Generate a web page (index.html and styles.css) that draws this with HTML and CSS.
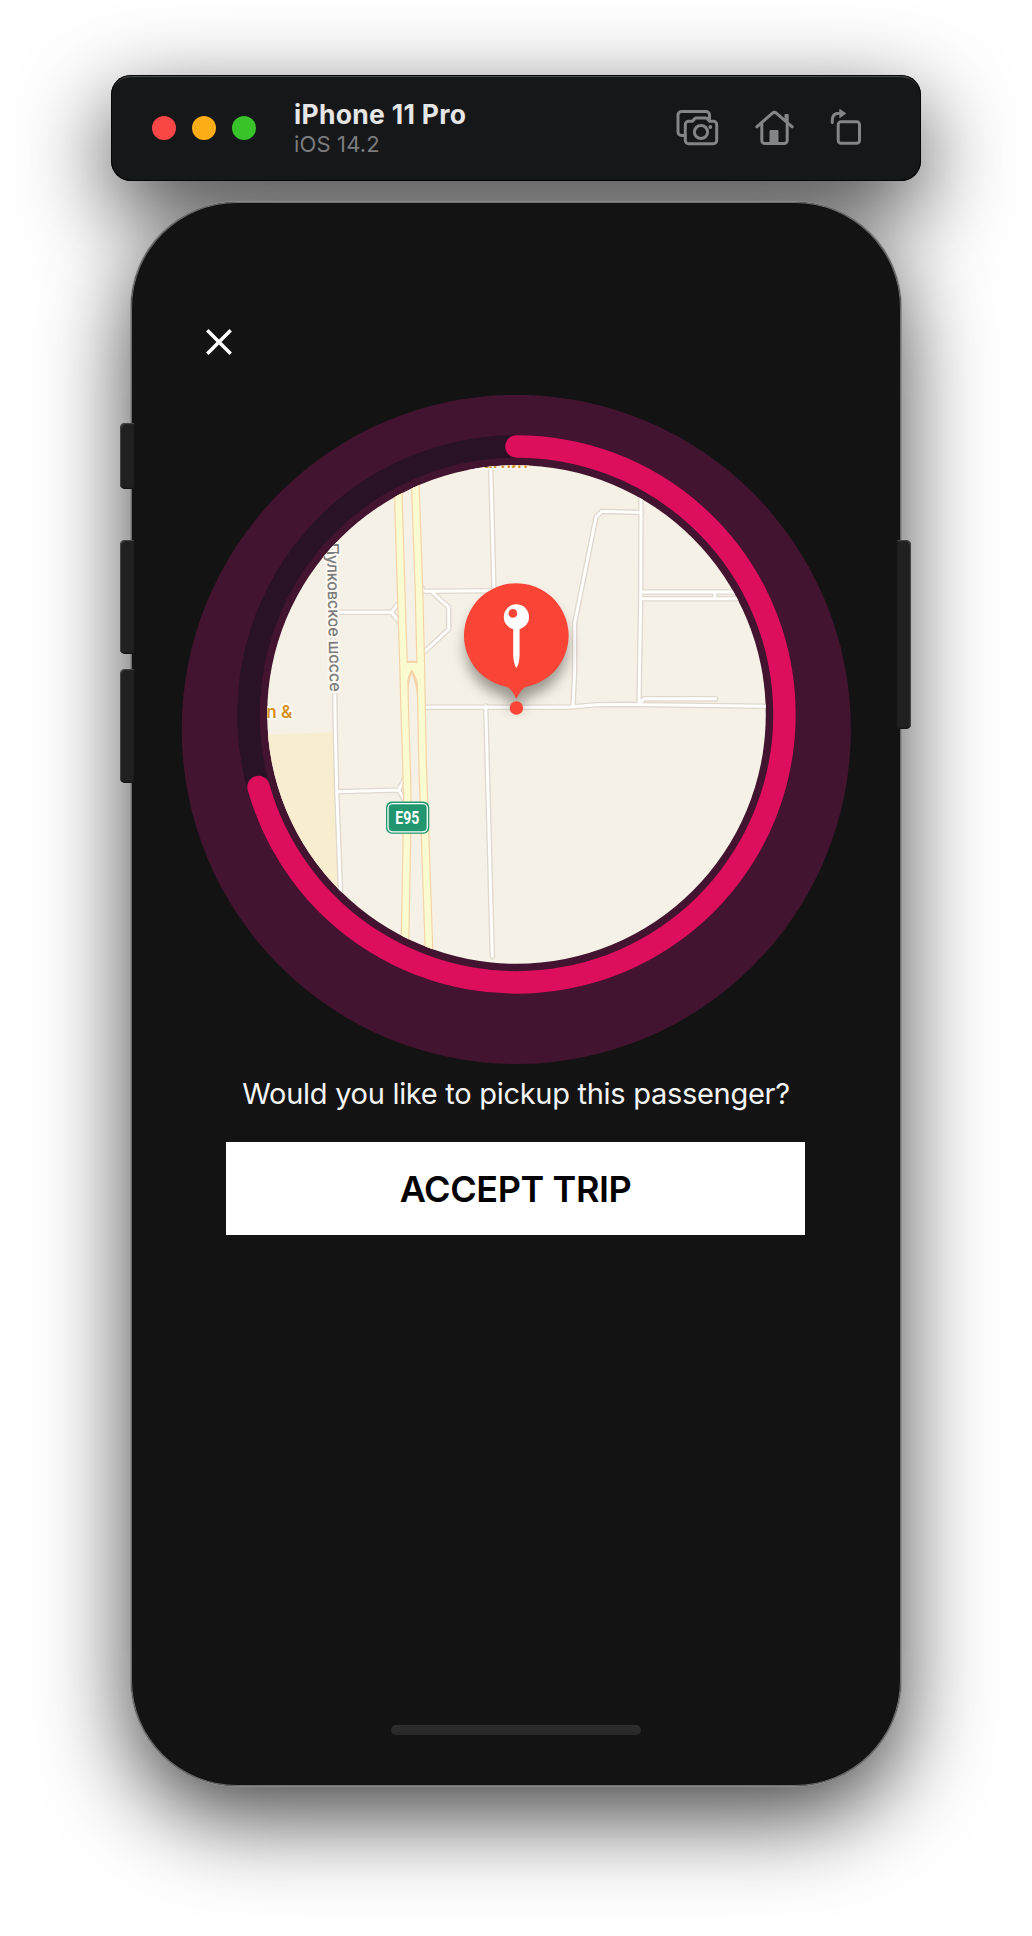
FILE: index.html
```html
<!DOCTYPE html>
<html lang="en">
<head>
<meta charset="utf-8">
<title>iPhone 11 Pro</title>
<link rel="stylesheet" href="styles.css">
</head>
<body>
<main class="desktop">
  <header class="toolbar lifted">
    <div class="lights">
      <span class="light light-close"></span>
      <span class="light light-minimize"></span>
      <span class="light light-zoom"></span>
    </div>
    <div class="titles">
      <h1 class="device-name">iPhone 11 Pro</h1>
      <p class="device-os">iOS 14.2</p>
    </div>
    <div class="tools">
      <svg class="tool" width="44" height="38" viewBox="675 109 44 38">
        <path d="M684 135.500h-2.500a3.500 3.500 0 0 1-3.500-3.500v-17a3.500 3.500 0 0 1 3.500-3.500h24.500a3.500 3.500 0 0 1 3.500 3.500v4"/>
        <path d="M688.500 121.300h4l2.300-2.800q.6-.6 1.600-.6h9.200q1 0 1.600.6l2.300 2.800h4a3.200 3.200 0 0 1 3.200 3.200v16a3.200 3.200 0 0 1-3.200 3.200h-25a3.200 3.200 0 0 1-3.200-3.200v-16a3.200 3.200 0 0 1 3.200-3.200z"/>
        <circle cx="701" cy="132" r="6.600"/>
        <circle class="solid" cx="710.300" cy="127" r="1.900"/>
      </svg>
      <svg class="tool" width="40" height="38" viewBox="754.500 109 40 38">
        <path d="M757.300 126.800L772.700 113.300q2.200-1.900 4.400 0L792.700 126.800"/>
        <path d="M762.300 123.500v17a3 3 0 0 0 3 3h19.400a3 3 0 0 0 3-3v-17"/>
        <path class="solid" d="M785 114.800q0-.8.800-.8h2.600q.8 0 .8.800v9.500l-4.200-3.600z"/>
        <path class="solid" d="M770 131q0-1 1-1h7q1 0 1 1v12h-9z"/>
      </svg>
      <svg class="tool" width="34" height="38" viewBox="829 109 34 38">
        <path d="M832.300 122.500v-2.500q0-6.700 7-6.700h1"/>
        <path class="solid" d="M839.300 109.300q0-.7.600-.3l5.800 4.100q.5.400 0 .8l-5.800 4q-.6.400-.6-.3z"/>
        <rect x="838.200" y="121.700" width="21.300" height="21.600" rx="2.800"/>
      </svg>
    </div>
  </header>

  <section class="phone lifted">
    <span class="key key-mute"></span>
    <span class="key key-up"></span>
    <span class="key key-down"></span>
    <span class="key key-power"></span>

    <button class="close" aria-label="Close">
      <svg width="28" height="28" viewBox="0 0 28 28"><path d="M2.300 2.300L25.700 25.700M25.700 2.300L2.300 25.700"/></svg>
    </button>

    <svg class="trip" width="670" height="670" viewBox="181 395 670 670">
      <defs>
        <clipPath id="lens"><circle cx="516.500" cy="714.500" r="249.300"/></clipPath>
        <filter id="soft" x="-50%" y="-50%" width="200%" height="200%"><feGaussianBlur stdDeviation="7"/></filter>
      </defs>
      <circle class="halo" cx="516.300" cy="729.400" r="334.600"/>
      <circle class="track" cx="516.500" cy="714.400" r="268"/>
      <path class="progress" d="M516.500 446.400A268 268 0 1 1 258.500 787"/>
      <g clip-path="url(#lens)">
        <circle class="land" cx="516.500" cy="714.500" r="250"/>
        <path class="field" d="M260 734.500L334 732.300L341.500 900H260z"/>
        <g class="street-edge">
          <g id="streets">
            <path d="M490.500 460L494 592"/>
            <path d="M420 585L424 591.300L498 590.700"/>
            <path d="M432 592L448.700 607.300V629.300L422 654"/>
            <path d="M334 612.300H391.300L399 603M391.300 612.300L399 621.500"/>
            <path d="M330 540L334.700 690L335.300 730L336.700 790L341 905"/>
            <path d="M337 791.800L398.500 790L404 780M398.500 790L404 799"/>
            <path d="M424 707.300H567L597 704.700L623 704.400L770 706.400"/>
            <path d="M485.700 706L492.300 956.500"/>
            <path d="M641 490L640.700 597L639 704"/>
            <path d="M641.500 512.400L601.700 511.400L596 517.300L574.600 623.300L574.600 672L573 706"/>
            <path d="M641 592H745M641 598.700H748M714.700 592V598.700"/>
            <path d="M639.300 704L644 698.700H715.500"/>
          </g>
        </g>
        <use class="street" href="#streets"/>
        <g class="highway-edge">
          <g id="highways">
            <path d="M397.500 465L398.200 492L401.500 603L403.500 663L405 720L406.700 770L407.300 800L406.700 850L404.500 965"/>
            <path d="M414.700 465L415.300 485L419 590L420.700 663L421.500 705L422.700 767L425 833L429.500 965"/>
          </g>
          <path class="link-edge" d="M405 663.500Q412 661 419 663.500"/>
          <path class="link-edge" d="M406.500 696Q407.500 677 411.700 670.500Q416 677 418.500 696"/>
        </g>
        <use class="highway" href="#highways"/>
        <path class="junction" d="M404 664Q412 661.300 420 664L420 690Q416.500 675 411.800 669.500Q407.500 675 405 690z"/>
        <text class="place" x="530" y="468" text-anchor="end">Магнит</text>
        <text class="place" x="292.300" y="718" text-anchor="end">n &amp;</text>
        <text class="road-name" transform="translate(326.800 543) rotate(88.800)" textLength="149">Пулковское шоссе</text>
        <rect class="badge" x="386" y="801.500" width="43.300" height="32.300" rx="6"/>
        <rect class="badge-line" x="388" y="803.600" width="39.300" height="28.200" rx="4.500"/>
        <text class="badge-text" x="395.300" y="824" textLength="24" lengthAdjust="spacingAndGlyphs">E95</text>
        <path class="pin-shadow" filter="url(#soft)" d="M516.400 596a51 51 0 1 0 .1 0zM506 695L516.500 713L527 695z"/>
      </g>
      <path class="pin" d="M507 686.900A52.300 52.300 0 1 1 525.600 686.900Q521 689 516.300 698.800Q512 689 507 686.900z"/>
      <circle class="pin" cx="516.400" cy="708" r="6.700"/>
      <circle class="glyph" cx="516.400" cy="616.900" r="12.600"/>
      <path class="glyph" d="M513.200 628H519.600V655Q519.300 664 516.400 668Q513.500 664 513.200 655z"/>
      <circle class="pin" cx="512.900" cy="613.400" r="4.300"/>
    </svg>

    <p class="question">Would you like to pickup this passenger?</p>
    <button class="accept">ACCEPT TRIP</button>
    <span class="home-bar"></span>
  </section>
</main>
</body>
</html>
```
FILE: styles.css
```css
* { box-sizing: border-box; }

body {
  margin: 0;
  background: #fff;
  font-family: Inter, "Liberation Sans", sans-serif;
}

.desktop {
  position: relative;
  z-index: 0;
  display: flex;
  flex-direction: column;
  align-items: center;
  gap: 21px;
  height: 1936px;
  padding-top: 75px;
  overflow: hidden;
}

.lifted { position: relative; }

/* The shadow sits beneath both windows, never on top of the other one. */
.lifted::before {
  content: "";
  position: absolute;
  inset: 0;
  z-index: -1;
  border-radius: inherit;
  box-shadow: 0 30px 90px rgba(0, 0, 0, 0.74);
}

.toolbar {
  display: flex;
  align-items: center;
  width: 810px;
  height: 106px;
  padding: 0 58px 0 41px;
  border-radius: 20px;
  background: #161719;
  box-shadow: inset 0 0 0 1px #050505, inset 0 2px 0 #4a4b4c;
}

.lights { display: flex; gap: 16px; }
.light { width: 24px; height: 24px; border-radius: 50%; }
.light-close { background: #fb4646; }
.light-minimize { background: #fdae17; }
.light-zoom { background: #38c32b; }

.titles { margin: 3px 0 0 38px; }

.device-name {
  margin: 0;
  color: #e6e6e7;
  font-size: 26.5px;
  font-weight: 700;
  line-height: 29px;
  letter-spacing: 0.3px;
}

.device-os {
  margin: 0;
  color: #7b7c7e;
  font-size: 22px;
  line-height: 30px;
  letter-spacing: 0.15px;
}

.tools { display: flex; gap: 35px; margin-left: auto; }

.tool {
  fill: none;
  stroke: #848587;
  stroke-width: 3;
  stroke-linecap: round;
  stroke-linejoin: round;
}
.tool .solid { fill: #848587; stroke: none; }

.phone {
  display: flex;
  flex-direction: column;
  align-items: center;
  width: 770px;
  height: 1584px;
  padding-top: 126px;
  border-radius: 106px;
  background: #131313;
  box-shadow: inset 0 0 0 1px #6f6f6f, 0 0 0 1px #8c8c8c;
}

.key {
  position: absolute;
  left: -11px;
  width: 14px;
  border-radius: 5px 0 0 5px;
  background: #202020;
  box-shadow: inset 1px 1px 1px #494949, inset 0 -1px 1px #111;
}
.key-mute { top: 221px; height: 66px; }
.key-up { top: 338px; height: 114px; }
.key-down { top: 467px; height: 114px; }
.key-power {
  top: 338px;
  right: -10px;
  left: auto;
  height: 189px;
  border-radius: 0 5px 5px 0;
  box-shadow: inset -1px 1px 1px #494949, inset 0 -1px 1px #111;
}

.close {
  display: flex;
  align-self: flex-start;
  margin: 0 0 0 74px;
  padding: 0;
  border: 0;
  background: none;
}
.close path { fill: none; stroke: #fff; stroke-width: 3.5; }

.trip { flex: none; margin-top: 39px; }

.halo { fill: #42142f; }
.track { fill: none; stroke: #291225; stroke-width: 22.5; }
.progress { fill: none; stroke: #dd0f5d; stroke-width: 22.5; stroke-linecap: round; }

.land { fill: #f6f1e6; }
.field { fill: #f8eecf; }

.street-edge, .street { fill: none; stroke-linecap: round; stroke-linejoin: round; }
.street-edge { stroke: #e0d8cd; stroke-width: 5.6; }
.street { stroke: #fff; stroke-width: 2.9; }

.highway-edge, .highway { fill: none; }
.highway-edge { stroke: #f5d3a6; stroke-width: 8.8; }
.highway { stroke: #fbfbd2; stroke-width: 6.4; }
.junction { fill: #fbfbd2; }
.link-edge { stroke-width: 3; }

.place, .road-name {
  paint-order: stroke;
  stroke: #fbf8f1;
  stroke-width: 4px;
  stroke-linejoin: round;
}
.place { fill: #d5901f; font-size: 17px; font-weight: 600; }
.road-name { fill: #7c7c7c; font-size: 16.5px; font-weight: 500; }

.badge { fill: #22966f; }
.badge-line { fill: none; stroke: #fff; stroke-width: 1.3; }
.badge-text { fill: #fff; font-family: Roboto, sans-serif; font-size: 18.5px; font-weight: 700; }

.pin { fill: #f94436; }
.pin-shadow { fill: rgba(0, 0, 0, 0.38); }
.glyph { fill: #fff; }

.question {
  margin: 11px 0 0;
  color: #f4f4f4;
  font-size: 29px;
  line-height: 36px;
  letter-spacing: -0.29px;
  white-space: nowrap;
}

.accept {
  flex: none;
  width: 579px;
  height: 93px;
  margin: 30px 1px 0 0;
  padding: 0;
  border: 0;
  background: #fff;
  color: #000;
  font-family: inherit;
  font-size: 36px;
  font-weight: 600;
  letter-spacing: -0.4px;
}

.home-bar {
  width: 250px;
  height: 10px;
  margin: auto 0 51px;
  border-radius: 5px;
  background: linear-gradient(#2e2e2e, #272727);
}
```
